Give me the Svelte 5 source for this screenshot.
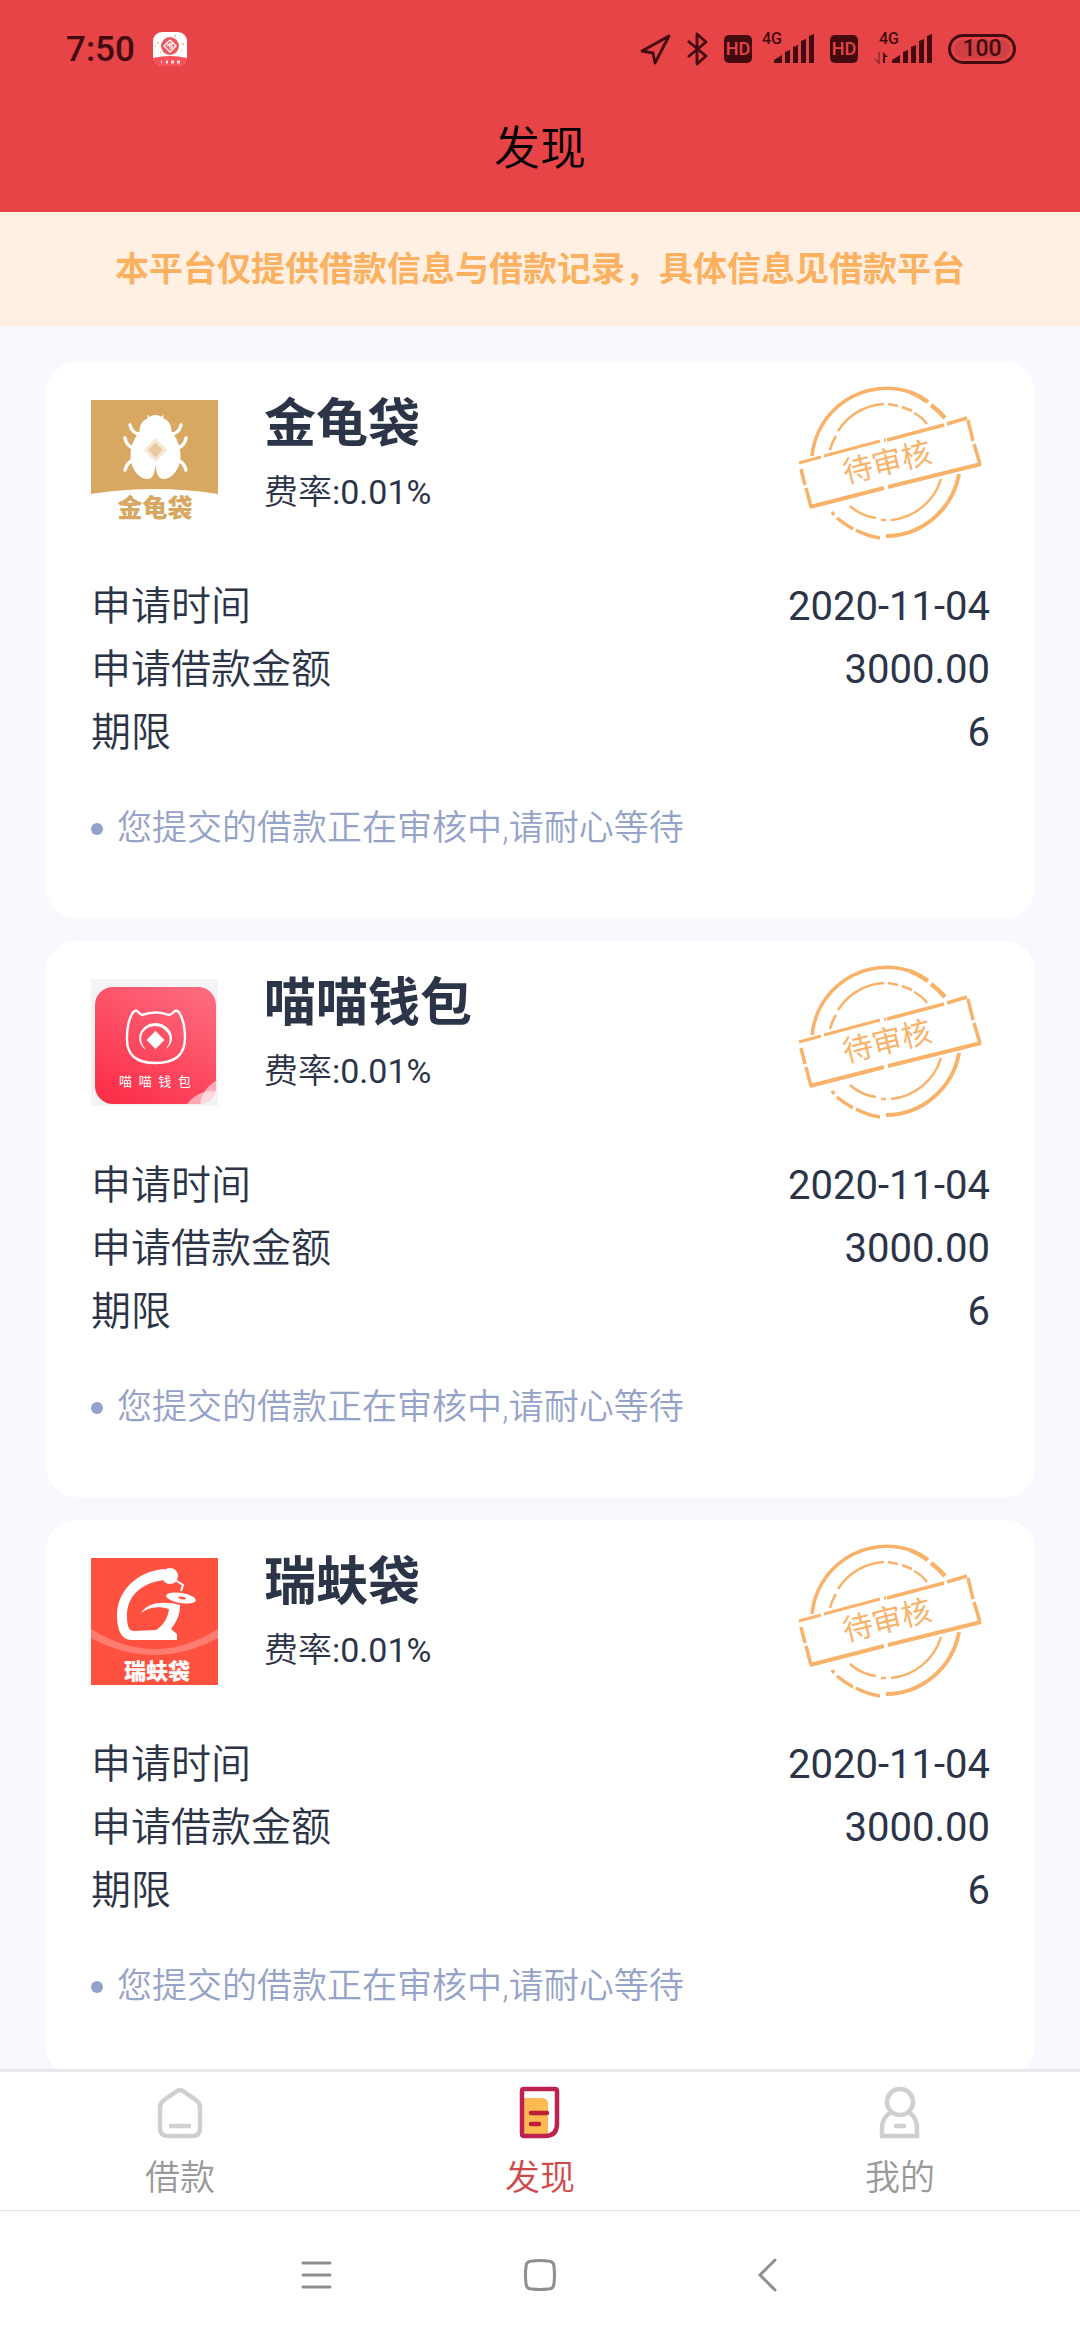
<script>
  const loans = [
    { name: '金龟袋', logo: 'beetle', rate: '0.01%', date: '2020-11-04', amount: '3000.00', term: '6' },
    { name: '喵喵钱包', logo: 'cat', rate: '0.01%', date: '2020-11-04', amount: '3000.00', term: '6' },
    { name: '瑞蚨袋', logo: 'ruifu', rate: '0.01%', date: '2020-11-04', amount: '3000.00', term: '6' }
  ];

  let activeTab = $state('discover');
</script>

{#snippet bars()}
  <path d="M0 31v-3l8-5v8zM11 31V20l5-2v13zM19 31V15l5-2v18zM27 31V9l5-2v24zM35 31V4l5-2v29z" fill="currentColor" />
{/snippet}

{#snippet logo(kind)}
  {#if kind === 'beetle'}
    <svg class="logo" viewBox="0 0 127 127" aria-hidden="true">
      <path d="M0 0h127v94Q64 84 0 94z" fill="#d8a862" />
      <g fill="none" stroke="#fff" stroke-width="3.4" stroke-linecap="round">
        <path d="M39 25q2 9 11 9M34 38q1 7 8 10M34 70q2-8 9-10" />
        <path d="M90 25q-2 9-11 9M95 38q-1 7-8 10M95 70q-2-8-9-10" />
        <path d="M57 16q1 3 4 3M72 16q-1 3-4 3" stroke-width="1.5" />
      </g>
      <path d="M64.5 15c5 0 7 3 9 4 5 2 7 7 7 13 5 5 9 14 9 24 0 12-8 23-17 23-5 0-7-5-8-14-1 9-3 14-8 14-9 0-17-11-17-23 0-10 4-19 9-24 0-6 2-11 7-13 3-1 4-4 9-4z" fill="#fff" />
      <path d="M64.5 38l12 12-12 12-12-12z" fill="#f6e8d6" />
      <path d="M64.5 44l6 6-6 6-6-6z" fill="#e8c9a0" stroke="#e8c9a0" stroke-width="2" stroke-linejoin="round" />
      <text x="64" y="117" text-anchor="middle" font-size="25" font-weight="900" fill="#d8a862">金龟袋</text>
    </svg>
  {:else if kind === 'cat'}
    <svg class="logo" viewBox="0 0 127 127" aria-hidden="true">
      <defs>
        <linearGradient id="catFill" x1="0.8" y1="0" x2="0.2" y2="1">
          <stop offset="0" stop-color="#fd6a7e" />
          <stop offset="1" stop-color="#fb2f48" />
        </linearGradient>
        <clipPath id="catClip"><rect x="4" y="8" width="121" height="117" rx="18" /></clipPath>
      </defs>
      <rect width="127" height="127" fill="#f4f4f4" />
      <rect x="4" y="8" width="121" height="117" rx="18" fill="url(#catFill)" />
      <g clip-path="url(#catClip)" fill="#fff" fill-opacity="0.55">
        <circle cx="121" cy="142" r="30" />
        <circle cx="138" cy="128" r="29" />
      </g>
      <path d="M51 36q14-5 27 0 3-1 6-4 3-1 5 3 5 9 5 24 0 25-29.5 25T36 59q0-15 5-24 2-4 5-3 2 2 5 4z" fill="none" stroke="#fff" stroke-width="2.4" stroke-linejoin="round" />
      <path d="M55 71C41 60 51 44 64.5 44S88 60 75 70q7-10 1-17-5-6-12-6t-12 6q-5 8 3 18z" fill="#fff" />
      <path d="M64.5 52l9 9-9 9-9-9z" fill="#fff" />
      <text x="64" y="107" text-anchor="middle" font-size="13" fill="#fff">喵&ensp;喵&ensp;钱&ensp;包</text>
    </svg>
  {:else}
    <svg class="logo" viewBox="0 0 127 127" aria-hidden="true">
      <rect width="127" height="127" fill="#ff5140" />
      <path d="M0 71Q64 111 127 71v9Q64 114 0 80z" fill="#ff7d70" />
      <path d="M74 11C44 13 26 35 26 57c0 16 5 25 14 25h46v-6l-6-5c6-8 9-15 9-24-16-4-32-3-39 8 8-6 18-7 28-4-1 9-6 17-13 21l-22 1c-6 0-7-7-7-15 0-20 14-33 37-36z" fill="#fff" />
      <circle cx="79" cy="18" r="8" fill="#fff" />
      <path d="M84 22l8 5-2 6" fill="none" stroke="#fff" stroke-width="2" />
      <ellipse cx="90" cy="40" rx="15" ry="5" transform="rotate(10 90 40)" fill="#fff" />
      <ellipse cx="91" cy="40" rx="4" ry="1.2" transform="rotate(10 91 40)" fill="#ff5140" />
      <text x="66" y="121" text-anchor="middle" font-size="22" font-weight="900" fill="#fff">瑞蚨袋</text>
    </svg>
  {/if}
{/snippet}

{#snippet stamp()}
  <svg class="stamp" viewBox="0 0 192 154" role="img" aria-label="待审核">
    <g fill="none" stroke="#f9b26a">
      <path d="M14 70A75 75 0 0 1 112 6" stroke-width="3.5" />
      <path d="M112 6q10 4 18 10M133 19q8 6 14 13" stroke-width="4.5" />
      <path d="M32 64q2-8 6-14M40 45A58 58 0 0 1 86 18M90 18l10 2M104 21l10 4M116 27q8 4 13 11" stroke-width="2.5" />
      <path d="M161 88A75 75 0 0 1 88 150" stroke-width="4" />
      <path d="M82 152q-13-2-24-8M55 143q-9-5-16-11M36 129l-2-3" stroke-width="3.5" />
      <path d="M143 93A58 58 0 0 1 93 134M88 134h-5M78 132q-15-2-26-12" stroke-width="2.5" />
      <path d="M1 77l22-6M26 70l56-15M86 54h2" stroke-width="3" />
      <path d="M89 54l57-15M149 38l20-6" stroke-width="3.5" />
      <path d="M170 34l5 21M176 58l6 20M3 83l4 16M8 102l5 19" stroke-width="3.5" />
      <path d="M12 121l74-19M90 101l93-23" stroke-width="4" />
    </g>
    <text x="89" y="87" text-anchor="middle" font-size="30" fill="#f9b26a" transform="rotate(-14 89 76)">待审核</text>
  </svg>
{/snippet}

<div class="screen">
  <header>
    <div class="status">
      <span class="time">7:50</span>
      <svg width="34" height="34" viewBox="0 0 34 34" aria-hidden="true">
        <rect width="34" height="34" rx="9" fill="#fff" />
        <path d="M0 26q17-4 34 0-1 8-9 8H9q-8 0-9-8z" fill="#f8515a" />
        <circle cx="17" cy="14" r="9" fill="#ea5a60" />
        <path d="M17 8l-6 6 6 6 6-6-3-3-4 4M17 8l3 3M14 14l4-3M17 17l3-3" fill="none" stroke="#fff" stroke-width="1.3" />
        <path d="M4 11h2M29 12h2M21 4h2M2 14h1M28 19h1M7 20h1" stroke="#e3c07a" stroke-width="1.5" />
        <path d="M8 30h1M13 30h2M18 30h3M24 30h3" stroke="#fff" stroke-width="3" stroke-opacity="0.8" />
      </svg>
      <div class="system">
        <svg width="31" height="32" viewBox="0 0 31 32" aria-hidden="true">
          <path d="M29 3L2 18l11 2 2 10z" fill="none" stroke="currentColor" stroke-width="2.8" stroke-linejoin="round" />
        </svg>
        <svg width="21" height="34" viewBox="0 0 21 34" aria-hidden="true">
          <path d="M1 9l18 15-9 8V2l9 8L1 25" fill="none" stroke="currentColor" stroke-width="2.8" stroke-linejoin="round" />
        </svg>
        <div class="sim">
          <span class="hd">HD</span>
          <svg width="52" height="44" viewBox="0 -5 52 44" aria-hidden="true">
            <text x="0" y="12" class="net">4G</text>
            <g transform="translate(12 0)">{@render bars()}</g>
          </svg>
        </div>
        <div class="sim">
          <span class="hd">HD</span>
          <svg width="64" height="44" viewBox="0 -5 64 44" aria-hidden="true">
            <text x="11" y="12" class="net">4G</text>
            <path d="M11 20v11l-4-4" fill="none" stroke="currentColor" stroke-width="1.5" stroke-opacity="0.5" />
            <path d="M15 31V20l5 5h-3v6z" fill="currentColor" />
            <g transform="translate(24 0)">{@render bars()}</g>
          </svg>
        </div>
        <span class="battery">100</span>
      </div>
    </div>
    <h1>发现</h1>
  </header>

  <p class="notice">本平台仅提供借款信息与借款记录，具体信息见借款平台</p>

  <main>
    {#each loans as loan (loan.name)}
      <article class="card">
        <div class="top">
          {@render logo(loan.logo)}
          <div class="info">
            <h2>{loan.name}</h2>
            <p>费率<span>:{loan.rate}</span></p>
          </div>
          {@render stamp()}
        </div>
        <dl>
          <div><dt>申请时间</dt><dd>{loan.date}</dd></div>
          <div><dt>申请借款金额</dt><dd>{loan.amount}</dd></div>
          <div><dt>期限</dt><dd>{loan.term}</dd></div>
        </dl>
        <p class="hint">您提交的借款正在审核中,请耐心等待</p>
      </article>
    {/each}
  </main>

  <nav class="tabs">
    <button class:active={activeTab === 'loan'} onclick={() => (activeTab = 'loan')}>
      <svg width="54" height="54" viewBox="0 0 54 54" aria-hidden="true">
        <path d="M24 6q3-2 6 0l14 10q3 3 3 6v21q0 8-7 8H15q-8 0-8-8V22q0-4 4-7z" fill="none" stroke="#cfcfcf" stroke-width="4.5" />
        <path d="M18 41h18" stroke="#cfcfcf" stroke-width="4.5" stroke-linecap="round" />
      </svg>
      借款
    </button>
    <button class:active={activeTab === 'discover'} onclick={() => (activeTab = 'discover')}>
      <svg width="54" height="54" viewBox="0 0 54 54" aria-hidden="true">
        <path d="M11 13h18q6 0 6 6v30H11z" fill="#fbba52" />
        <path d="M11 4h31q2 0 2 2v33q0 12-12 12H11q-2 0-2-2V6q0-2 2-2z" fill="none" stroke="#bd2150" stroke-width="4.5" />
        <path d="M18 28h16M18 39h8" stroke="#bd1f38" stroke-width="4.5" stroke-linecap="round" />
      </svg>
      发现
    </button>
    <button class:active={activeTab === 'mine'} onclick={() => (activeTab = 'mine')}>
      <svg width="54" height="54" viewBox="0 0 54 54" aria-hidden="true">
        <g fill="none" stroke="#cfcfcf" stroke-width="4.5">
          <circle cx="27" cy="17" r="13" />
          <path d="M18 27Q9 33 9 43v8h35v-8q0-10-8-16" />
          <path d="M23 41h8" stroke-linecap="round" />
        </g>
      </svg>
      我的
    </button>
  </nav>

  <nav class="system-nav">
    <button aria-label="菜单">
      <svg width="36" height="36" viewBox="0 0 36 36">
        <path d="M6 6h27M6 18h27M6 30h27" stroke="#8f8f8f" stroke-width="3" stroke-linecap="round" />
      </svg>
    </button>
    <button aria-label="主页">
      <svg width="36" height="36" viewBox="0 0 36 36">
        <path d="M10 4q8-1 16 0 6 0 6 6 1 8 0 16 0 6-6 6-8 1-16 0-6 0-6-6-1-8 0-16 0-6 6-6z" fill="none" stroke="#8f8f8f" stroke-width="3" />
      </svg>
    </button>
    <button aria-label="返回">
      <svg width="36" height="36" viewBox="0 0 36 36">
        <path d="M28 3L13 18l15 15" fill="none" stroke="#8f8f8f" stroke-width="3" stroke-linecap="round" />
      </svg>
    </button>
  </nav>
</div>

<style>
  :global(body) {
    margin: 0;
    background: #f8f9ff;
    font-family: Roboto, 'Noto Sans CJK SC', sans-serif;
    color: #2c3448;
  }

  h1, h2, p, dl, dd {
    margin: 0;
  }

  svg {
    display: block;
    flex: none;
  }

  button {
    border: none;
    padding: 0;
    background: none;
    font: inherit;
    cursor: pointer;
  }

  .screen {
    display: flex;
    flex-direction: column;
    height: 100vh;
  }

  header {
    background: #e64447;
  }

  .status {
    display: flex;
    align-items: center;
    gap: 18px;
    height: 70px;
    padding: 14px 64px 0 66px;
    color: #430b0f;
  }

  .time {
    font-size: 35px;
    font-weight: 500;
  }

  .system {
    display: flex;
    align-items: center;
    gap: 16px;
    margin-left: auto;
  }

  .sim {
    display: flex;
    align-items: center;
    gap: 10px;
  }

  .hd {
    width: 28px;
    border-radius: 5px;
    background: #430b0f;
    color: #e64447;
    font-size: 18px;
    font-weight: 500;
    line-height: 28px;
    text-align: center;
  }

  .net {
    font-size: 16px;
    font-weight: 500;
    fill: currentColor;
  }

  .battery {
    box-sizing: border-box;
    width: 68px;
    border: 3px solid #430b0f;
    border-radius: 15px;
    background: #cf3f43;
    box-shadow: inset 0 0 0 3px #e64447;
    font-size: 23px;
    font-weight: 500;
    line-height: 24px;
    text-align: center;
  }

  h1 {
    color: #000;
    font-size: 46px;
    font-weight: 350;
    line-height: 128px;
    text-align: center;
  }

  .notice {
    background: #fff0e3;
    color: #fcb161;
    font-size: 34px;
    font-weight: 700;
    line-height: 115px;
    text-align: center;
  }

  main {
    flex: 1;
    min-height: 0;
    display: flex;
    flex-direction: column;
    gap: 23px;
    padding: 35px 45px 0 46px;
    overflow-y: auto;
    scrollbar-width: none;
  }

  .card {
    flex: none;
    padding: 24px 45px 64px;
    border-radius: 30px;
    background: #fff;
  }

  .top {
    display: flex;
    align-items: center;
    gap: 46px;
  }

  .logo {
    width: 127px;
    height: 127px;
  }

  .info {
    flex: 1;
    padding-bottom: 20px;
  }

  h2 {
    font-size: 52px;
    font-weight: 700;
    line-height: 64px;
  }

  .info p {
    margin-top: 13px;
    font-size: 34px;
    font-weight: 350;
    line-height: 44px;
  }

  .info span {
    font-weight: 400;
  }

  .stamp {
    width: 192px;
    height: 154px;
  }

  dl {
    margin-top: 35px;
    font-size: 40px;
    line-height: 63px;
  }

  dl div {
    display: flex;
    justify-content: space-between;
  }

  dt {
    font-weight: 350;
  }

  .hint {
    display: flex;
    align-items: center;
    gap: 14px;
    margin-top: 40px;
    color: #96a3c9;
    font-size: 35px;
    font-weight: 350;
    line-height: 50px;
  }

  .hint::before {
    content: '';
    width: 12px;
    height: 12px;
    border-radius: 50%;
    background: #93a2cc;
  }

  .tabs {
    display: flex;
    border-top: 3px solid #e8e8ec;
    background: #fff;
  }

  .tabs button {
    flex: 1;
    display: flex;
    flex-direction: column;
    align-items: center;
    gap: 17px;
    padding: 13px 0 8px;
    color: #999;
    font-size: 35px;
    font-weight: 350;
    line-height: 46px;
  }

  .tabs .active {
    color: #d0494b;
  }

  .system-nav {
    display: flex;
    justify-content: center;
    gap: 189px;
    padding: 46px 0 47px;
    border-top: 1px solid #e4e4e4;
    background: #fff;
  }
</style>
